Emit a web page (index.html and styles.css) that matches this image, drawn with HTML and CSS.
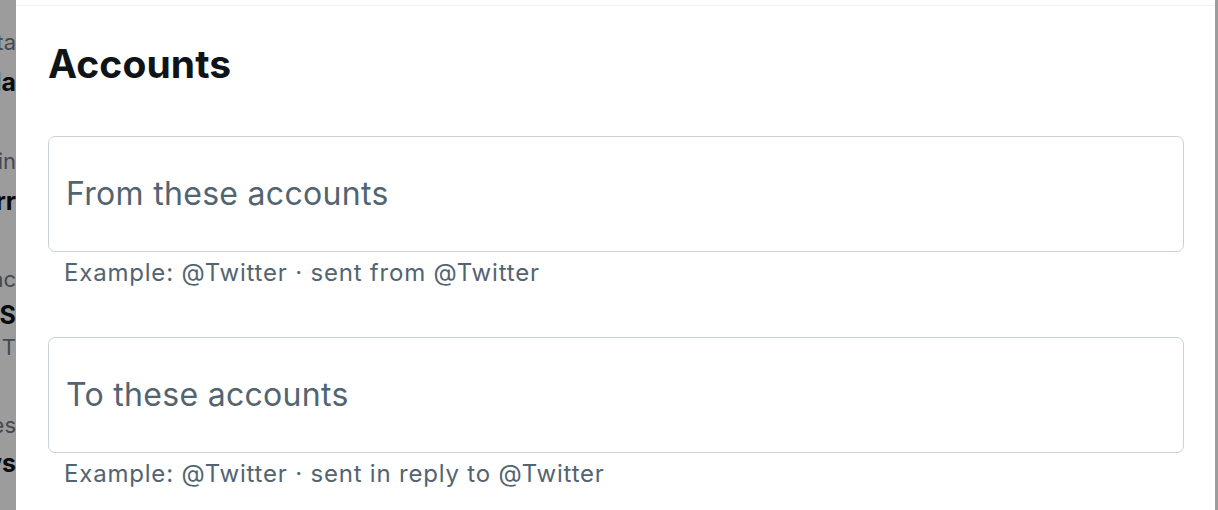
FILE: index.html
```html
<!DOCTYPE html>
<html lang="en">
<head>
<meta charset="utf-8">
<title>Advanced search – Accounts</title>
<link rel="stylesheet" href="styles.css">
</head>
<body>
<div class="page">
  <div class="backdrop">
    <div class="bg-line bg-meta l1"><span>Trending in Atlanta</span></div>
    <div class="bg-line bg-title l2"><span>Canada</span></div>
    <div class="bg-line bg-meta l3"><span>Trending in Berlin</span></div>
    <div class="bg-line bg-title l4"><span>Kerr</span></div>
    <div class="bg-line bg-meta l5"><span>Entertainment Inc</span></div>
    <div class="bg-line bg-title l6"><span>#DaS</span></div>
    <div class="bg-line bg-meta l7"><span>12.5K T</span></div>
    <div class="bg-line bg-meta l8"><span>Trending in Games</span></div>
    <div class="bg-line bg-title l9"><span>News</span></div>
  </div>
  <main class="modal">
    <div class="modal-top"></div>
    <section class="section">
      <h2 class="section-title">Accounts</h2>
      <div class="field">
        <input class="field-input" type="text" placeholder="From these accounts">
      </div>
      <p class="hint">Example: @Twitter · sent from @Twitter</p>
      <div class="field field-second">
        <input class="field-input" type="text" placeholder="To these accounts">
      </div>
      <p class="hint">Example: @Twitter · sent in reply to @Twitter</p>
    </section>
  </main>
  <div class="edge"></div>
</div>
</body>
</html>
```

FILE: styles.css
```css
* { box-sizing: border-box; }

html, body {
  margin: 0;
  padding: 0;
  width: 1218px;
  height: 510px;
  overflow: hidden;
  background: #9c9c9c;
  font-family: Inter, "Liberation Sans", Arial, sans-serif;
}

.page {
  display: flex;
  width: 1218px;
  height: 510px;
}

.backdrop {
  width: 16px;
  flex: 0 0 16px;
  overflow: hidden;
  background: #9c9c9c;
  display: flex;
  flex-direction: column;
}

.bg-line {
  display: flex;
  justify-content: flex-end;
  white-space: nowrap;
}

.bg-meta {
  font-size: 22px;
  line-height: 26px;
  color: #434a51;
}

.bg-title {
  font-size: 25px;
  line-height: 30px;
  font-weight: 700;
  color: #090c0f;
}

.l1 { margin-top: 29px; }
.l2 { margin-top: 12px; }
.l3 { margin-top: 51px; }
.l4 { margin-top: 12px; }
.l5 { margin-top: 50px; }
.l6 { margin-top: 8px; }
.l7 { margin-top: 4px; }
.l8 { margin-top: 52px; }
.l9 { margin-top: 10px; }

.modal {
  flex: 1 1 auto;
  background: #ffffff;
  padding-top: 5px;
}

.modal-top {
  height: 1px;
  background: #eff3f4;
}

.section {
  padding: 34px 31px 0 32px;
}

.section-title {
  margin: 0;
  font-size: 39px;
  line-height: 48px;
  font-weight: 700;
  color: #0f1419;
  letter-spacing: 0.1px;
}

.field {
  margin-top: 48px;
  height: 116px;
  border: 1px solid #c9d4d9;
  border-radius: 7px;
  display: flex;
  align-items: center;
}

.field-second {
  margin-top: 50px;
}

.field-input {
  flex: 1;
  border: 0;
  outline: none;
  background: transparent;
  padding: 0 0 0 17px;
  font-family: Inter, "Liberation Sans", Arial, sans-serif;
  font-size: 32px;
  line-height: 40px;
  letter-spacing: 0.3px;
  color: #0f1419;
}

.field-input::placeholder {
  color: #536471;
  opacity: 1;
}

.hint {
  margin: 7px 0 0 0;
  padding-left: 16px;
  font-size: 24px;
  line-height: 28px;
  letter-spacing: 0.8px;
  color: #536471;
}

.edge {
  width: 3px;
  flex: 0 0 3px;
  background: #9c9c9c;
}
```
